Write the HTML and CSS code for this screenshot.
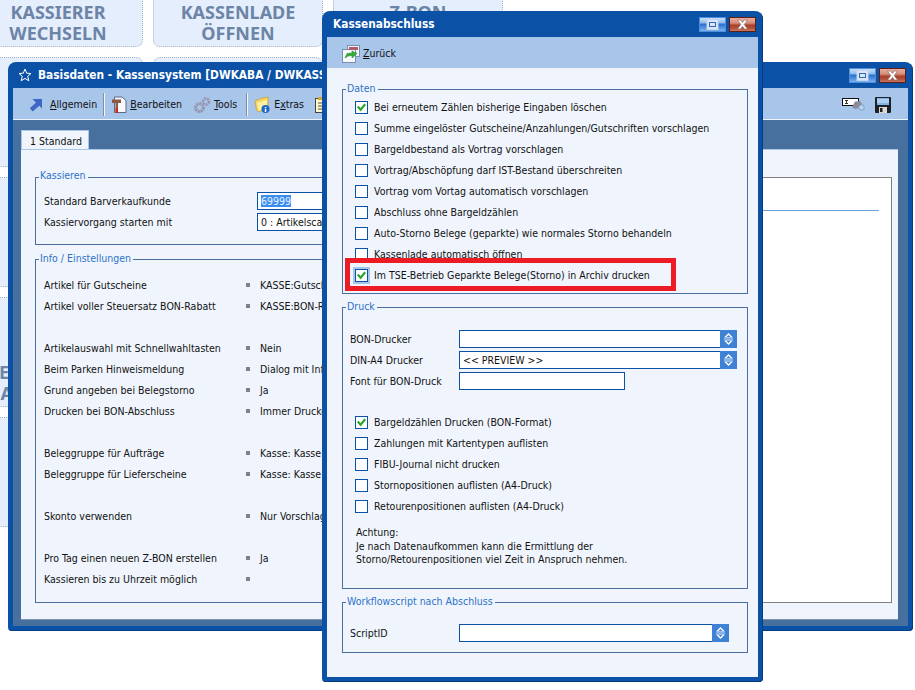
FILE: index.html
```html
<!DOCTYPE html>
<html lang="de">
<head>
<meta charset="utf-8">
<title>Kassenabschluss</title>
<link rel="stylesheet" href="styles.css">
</head>
<body>
<svg class="defs" width="0" height="0" aria-hidden="true">
  <symbol id="spin" viewBox="0 0 17 18">
    <path d="M8.5 3 13 7.5H4Z M8.5 15 13 10.5H4Z" fill="#fff"/>
    <path d="M8.5 5 10.5 7H6.5Z M8.5 13 10.5 11H6.5Z" fill="#3f81d4"/>
    <path d="M4 9H13" stroke="#cfe0f6" stroke-width="1"/>
  </symbol>
  <symbol id="tick" viewBox="0 0 12 12">
    <path d="M2 5.500 5 9 10 3" fill="none" stroke="#2ea52e" stroke-width="2.400"/>
  </symbol>
  <symbol id="restore" viewBox="0 0 27 15">
    <rect x="8" y="2.500" width="11" height="10" fill="#dbe7f7" stroke="#c5d6ee"/>
    <rect x="10.500" y="5.500" width="6" height="4" fill="none" stroke="#2f68b4"/>
  </symbol>
  <symbol id="close" viewBox="0 0 27 15">
    <path d="M8.500 3H11.500L13.500 5.500 15.500 3H18.500L15.200 7.500 18.500 12H15.500L13.500 9.500 11.500 12H8.500L11.800 7.500Z" fill="#fff" stroke="#7a6a66" stroke-width=".6"/>
  </symbol>
</svg>

<main class="desktop">
  <section class="tiles">
    <div class="tile">KASSIERER<br>WECHSELN</div>
    <div class="tile">KASSENLADE<br>ÖFFNEN</div>
    <div class="tile">Z-BON<br>DRUCKEN</div>
    <div class="tile"></div>
    <div class="tile"></div>
    <div class="tile"></div>
    <div class="tile"></div>
    <div class="tile"></div>
    <div class="tile"></div>
    <div class="tile">BEDIENERWAHL<br>NACHBUCHUNG</div>
    <div class="tile"></div>
    <div class="tile"></div>
    <div class="tile"></div>
  </section>

  <section class="window window-back">
    <header class="titlebar">
      <svg class="star" width="14" height="14" viewBox="0 0 14 14"><path d="M7 1 8.700 5.200 13 5.500 9.700 8.300 10.800 12.800 7 10.400 3.200 12.800 4.300 8.300 1 5.500 5.300 5.200Z" fill="none" stroke="#fff" stroke-width="1"/></svg>
      <h1 class="title title-back">Basisdaten - Kassensystem [DWKABA / DWKASSE]</h1>
      <div class="winbtns">
        <span class="winbtn winbtn-restore"><svg width="27" height="15"><use href="#restore"/></svg></span>
        <span class="winbtn winbtn-close"><svg width="27" height="15"><use href="#close"/></svg></span>
      </div>
    </header>
    <nav class="toolbar toolbar-back">
      <div class="tool tool-allgemein">
        <svg width="14" height="14" viewBox="0 0 14 14"><path d="M3.500 1H13V10.500L10.200 7.700 3.700 13.500 .8 10.300 7 4.500Z" fill="#3f66c4"/></svg>
        <span><u>A</u>llgemein</span>
      </div>
      <i class="sep"></i>
      <div class="tool tool-bearbeiten">
        <svg width="16" height="18" viewBox="0 0 16 18"><path d="M3.500 1H11L15 4.500V16.500H3.500Z" fill="#f7f9fd" stroke="#5a6b8a"/><path d="M1 3.500H10V7H7V17H4.500V7H1Z" fill="#8a5a44"/><rect x="4.500" y="12" width="2.500" height="5" fill="#d52a1a"/></svg>
        <span><u>B</u>earbeiten</span>
      </div>
      <div class="tool tool-tools">
        <svg width="18" height="18" viewBox="0 0 18 18"><circle cx="6.500" cy="11.500" r="4" fill="none" stroke="#8d8da8" stroke-width="3" stroke-dasharray="2 1"/><circle cx="6.500" cy="11.500" r="5" fill="none" stroke="#a9a9c0" stroke-width="1" stroke-dasharray="2 1.200"/><circle cx="13" cy="5.500" r="3" fill="none" stroke="#9090ac" stroke-width="2.500" stroke-dasharray="2 1"/><circle cx="13" cy="5.500" r="4.300" fill="none" stroke="#b0b0c4" stroke-width="1" stroke-dasharray="2 1"/></svg>
        <span><u>T</u>ools</span>
      </div>
      <i class="sep sep-2"></i>
      <div class="tool tool-extras">
        <svg width="16" height="18" viewBox="0 0 16 18"><path d="M1 5 7 2.500 14 1V11L5 16 2.500 14Z" fill="#f6d964" stroke="#c9a02c" stroke-width=".8"/><path d="M3 7 13 4V10L5 15Z" fill="#fdf0a8"/><circle cx="11.500" cy="13" r="4" fill="#1b66c9"/><rect x="10.800" y="11" width="1.500" height="1.300" fill="#fff"/><rect x="10.800" y="13" width="1.500" height="3" fill="#fff"/></svg>
        <span>E<u>x</u>tras</span>
      </div>
      <svg class="tool-clip" width="14" height="16" viewBox="0 0 14 16"><rect x=".5" y="1.500" width="12" height="14" fill="#fdf6c8" stroke="#444"/><rect x="3" y="0" width="7" height="3" fill="#d8a52a"/><path d="M3 6H10M3 9H10M3 12H8" stroke="#555"/></svg>
      <div class="tool-right">
        <svg width="23" height="13" viewBox="0 0 23 13"><rect x=".5" y=".5" width="16" height="7" fill="#fff" stroke="#111"/><path d="M3 2.500H6M3 5.500H6M4.500 2.500V5.500" stroke="#333"/><path d="M10 9 13 3.500 18 3 20 6 17 10 13 11Z" fill="#8b8b9c"/><circle cx="19.500" cy="9.500" r="2.700" fill="#bcd6ee" stroke="#6d93b8" stroke-width=".8"/></svg>
        <svg width="16" height="16" viewBox="0 0 16 16"><rect width="16" height="16" rx="1" fill="#1d2024"/><rect x="2" y="1" width="12" height="7" fill="#7fb4e8"/><path d="M2 3H14M2 5H14" stroke="#d9e9f8"/><rect x="4" y="10" width="8" height="6" fill="#d8d8d8"/><rect x="5" y="11" width="2.500" height="4" fill="#222"/></svg>
      </div>
    </nav>
    <div class="back-body">
      <div class="tab">1 Standard</div>
      <div class="panel">
        <div class="panel-left">
          <div class="group group-kassieren">
            <span class="legend">Kassieren</span>
            <div class="form-row">
              <span class="form-label">Standard Barverkaufkunde</span>
              <span class="field"><span class="selected">69999</span></span>
            </div>
            <div class="form-row">
              <span class="form-label">Kassiervorgang starten mit</span>
              <span class="field">0 : Artikelscan und Suche</span>
            </div>
          </div>
          <div class="group group-info">
            <span class="legend">Info / Einstellungen</span>
            <div class="info-row"><span>Artikel für Gutscheine</span><i class="dot"></i><span>KASSE:Gutschein</span></div>
            <div class="info-row"><span>Artikel voller Steuersatz BON-Rabatt</span><i class="dot"></i><span>KASSE:BON-Rabatt</span></div>
            <div class="info-row"></div>
            <div class="info-row"><span>Artikelauswahl mit Schnellwahltasten</span><i class="dot"></i><span>Nein</span></div>
            <div class="info-row"><span>Beim Parken Hinweismeldung</span><i class="dot"></i><span>Dialog mit Info</span></div>
            <div class="info-row"><span>Grund angeben bei Belegstorno</span><i class="dot"></i><span>Ja</span></div>
            <div class="info-row"><span>Drucken bei BON-Abschluss</span><i class="dot"></i><span>Immer Drucken</span></div>
            <div class="info-row"></div>
            <div class="info-row"><span>Beleggruppe für Aufträge</span><i class="dot"></i><span>Kasse: Kasse</span></div>
            <div class="info-row"><span>Beleggruppe für Lieferscheine</span><i class="dot"></i><span>Kasse: Kasse</span></div>
            <div class="info-row"></div>
            <div class="info-row"><span>Skonto verwenden</span><i class="dot"></i><span>Nur Vorschlag</span></div>
            <div class="info-row"></div>
            <div class="info-row"><span>Pro Tag einen neuen Z-BON erstellen</span><i class="dot"></i><span>Ja</span></div>
            <div class="info-row"><span>Kassieren bis zu Uhrzeit möglich</span><i class="dot"></i><span></span></div>
          </div>
        </div>
        <div class="white-box"><div class="white-line"></div></div>
      </div>
    </div>
  </section>

  <section class="window window-front">
    <header class="titlebar">
      <h2 class="title title-front">Kassenabschluss</h2>
      <div class="winbtns">
        <span class="winbtn winbtn-restore"><svg width="27" height="15"><use href="#restore"/></svg></span>
        <span class="winbtn winbtn-close"><svg width="27" height="15"><use href="#close"/></svg></span>
      </div>
    </header>
    <nav class="toolbar toolbar-front">
      <div class="tool">
        <svg width="18" height="18" viewBox="0 0 18 18"><rect x="5.500" y=".5" width="12" height="11" fill="#eef3fb" stroke="#7d8fae"/><rect x=".5" y="4.500" width="13" height="13" fill="#f6f8fc" stroke="#7d8fae"/><rect x="7" y="2" width="9" height="3" fill="#b45a6a"/><path d="M3 13 5 8.500 10 8 10 6 15 8.500 10 13 10 10.500 6 11Z" fill="#35b035" stroke="#1d7c1d" stroke-width=".5"/></svg>
        <span><u>Z</u>urück</span>
      </div>
    </nav>
    <div class="front-body">
      <div class="group group-daten">
        <span class="legend">Daten</span>
        <label class="check-row"><span class="box"><svg width="12" height="12"><use href="#tick"/></svg></span>Bei erneutem Zählen bisherige Eingaben löschen</label>
        <label class="check-row"><span class="box"></span>Summe eingelöster Gutscheine/Anzahlungen/Gutschriften vorschlagen</label>
        <label class="check-row"><span class="box"></span>Bargeldbestand als Vortrag vorschlagen</label>
        <label class="check-row"><span class="box"></span>Vortrag/Abschöpfung darf IST-Bestand überschreiten</label>
        <label class="check-row"><span class="box"></span>Vortrag vom Vortag automatisch vorschlagen</label>
        <label class="check-row"><span class="box"></span>Abschluss ohne Bargeldzählen</label>
        <label class="check-row"><span class="box"></span>Auto-Storno Belege (geparkte) wie normales Storno behandeln</label>
        <label class="check-row"><span class="box"></span>Kassenlade automatisch öffnen</label>
        <label class="check-row"><span class="box box-focus"><svg width="12" height="12"><use href="#tick"/></svg></span>Im TSE-Betrieb Geparkte Belege(Storno) in Archiv drucken</label>
        <div class="highlight"></div>
      </div>
      <div class="group group-druck">
        <span class="legend">Druck</span>
        <div class="print-row"><span class="print-label">BON-Drucker</span><span class="combo"><span class="combo-text"></span><svg class="spin" width="17" height="18"><use href="#spin"/></svg></span></div>
        <div class="print-row"><span class="print-label">DIN-A4 Drucker</span><span class="combo"><span class="combo-text">&lt;&lt; PREVIEW &gt;&gt;</span><svg class="spin" width="17" height="18"><use href="#spin"/></svg></span></div>
        <div class="print-row"><span class="print-label">Font für BON-Druck</span><span class="font-field"></span></div>
        <div class="print-checks">
          <label class="check-row"><span class="box"><svg width="12" height="12"><use href="#tick"/></svg></span>Bargeldzählen Drucken (BON-Format)</label>
          <label class="check-row"><span class="box"></span>Zahlungen mit Kartentypen auflisten</label>
          <label class="check-row"><span class="box"></span>FIBU-Journal nicht drucken</label>
          <label class="check-row"><span class="box"></span>Stornopositionen auflisten (A4-Druck)</label>
          <label class="check-row"><span class="box"></span>Retourenpositionen auflisten (A4-Druck)</label>
        </div>
        <p class="note">Achtung:<br>Je nach Datenaufkommen kann die Ermittlung der<br>Storno/Retourenpositionen viel Zeit in Anspruch nehmen.</p>
      </div>
      <div class="group group-workflow">
        <span class="legend">Workflowscript nach Abschluss</span>
        <div class="print-row"><span class="print-label">ScriptID</span><span class="combo combo-script"><span class="combo-text"></span><svg class="spin" width="17" height="18"><use href="#spin"/></svg></span></div>
      </div>
    </div>
  </section>
</main>
</body>
</html>
```

FILE: styles.css
```css
* { box-sizing: border-box; }

html, body {
  margin: 0;
  height: 100%;
  background: #fff;
  overflow: hidden;
}

body {
  font-family: "DejaVu Sans Condensed", "DejaVu Sans", sans-serif;
  font-size: 10.5px;
  color: #111;
}

.defs { position: absolute; }

.desktop {
  position: relative;
  width: 915px;
  height: 690px;
  overflow: hidden;
}

/* Background tiles */
.tiles {
  position: absolute;
  left: -27px;
  top: -63px;
  display: grid;
  grid-template-columns: repeat(3, 170px);
  grid-auto-rows: 110px;
  gap: 10px;
}

.tile {
  display: flex;
  align-items: flex-end;
  justify-content: center;
  padding-bottom: 2px;
  text-align: center;
  font-family: "Noto Sans", sans-serif;
  font-size: 18px;
  line-height: 21px;
  font-weight: 700;
  color: #6c84a6;
  background: #e4eefc;
  border: 1px dotted #a9b3c2;
  border-radius: 7px;
  white-space: nowrap;
}

/* Windows */
.window {
  position: absolute;
  display: flex;
  flex-direction: column;
  padding: 0 5px 5px;
  background: #0b52a6;
  border-radius: 8px 8px 4px 4px;
  box-shadow: inset -1px -1px 0 #063c80;
}

.window-back { left: 8px; top: 62px; width: 905px; height: 569px; }
.window-front { left: 322px; top: 11px; width: 441px; height: 671px; }

.titlebar {
  flex: none;
  display: flex;
  align-items: center;
  height: 26px;
  color: #fff;
}

.star { margin: 0 6px 0 5px; }

.title {
  margin: 0;
  font-size: 11.8px;
  font-weight: 700;
  white-space: nowrap;
  overflow: hidden;
  flex: 1;
}

.title-front { padding-left: 6px; }

.winbtns { display: flex; gap: 3px; margin-right: 2px; }

.winbtn {
  display: block;
  width: 27px;
  height: 15px;
  line-height: 0;
}

.winbtn-restore {
  background: linear-gradient(#cfe3fa 0, #9cc3f0 35%, #2f74cf 50%, #4f90e0 70%, #8dbcf0 100%);
  box-shadow: inset 0 0 0 1px #4c8fdf;
}

.winbtn-close {
  background: linear-gradient(#f0b3a4 0, #d68d7b 40%, #a8402b 55%, #b2503a 75%, #d48a76 100%);
  box-shadow: inset 0 0 0 1px #5a2016;
}

.toolbar {
  flex: none;
  display: flex;
  align-items: center;
  height: 31px;
  padding-top: 2px;
  background: #a8c5ea;
  line-height: 15px;
}

.toolbar-back { border-bottom: 1px solid #eef4fc; height: 32px; padding-left: 16px; }
.toolbar-front { padding-left: 15px; }

.tool { display: flex; align-items: center; gap: 3px; white-space: nowrap; }
.tool-allgemein { gap: 7px; }
.tool-bearbeiten { margin-left: 6px; gap: 3px; }
.tool-tools { margin-left: 11px; gap: 3px; }
.tool-extras { margin-left: 6px; gap: 4px; }
.tool-clip { margin-left: 11px; }
.tool-right { display: flex; align-items: center; gap: 10px; margin-left: auto; margin-right: 17px; }

.sep {
  width: 2px;
  height: 23px;
  margin-left: 6px;
  background: linear-gradient(90deg, #7f8ea3 50%, #f2f6fc 50%);
}

.sep-2 { margin-left: 9px; }

/* Back window body */
.back-body {
  flex: 1;
  display: flex;
  flex-direction: column;
  min-height: 0;
  padding: 10px 10px 6px 8px;
  background: #47709e;
}

.tab {
  align-self: flex-start;
  width: 68px;
  height: 20px;
  padding: 2px 0 0 8px;
  line-height: 16px;
  background: #f0f5fd;
  border: 1px solid #a8c5ea;
  border-bottom: 0;
  white-space: nowrap;
}

.panel {
  flex: 1;
  display: flex;
  min-height: 0;
  padding: 27px 6px 16px 14px;
  background: #f0f5fd;
  border-top: 1px solid #a8c5ea;
  border-bottom: 1px solid #7d94b0;
  margin-top: -1px;
}

.panel-left {
  flex: none;
  width: 560px;
  display: flex;
  flex-direction: column;
  gap: 14px;
}

.white-box {
  flex: 1;
  padding-top: 32px;
  padding-right: 12px;
  background: #fff;
  border: 1px solid #808080;
}

.white-line { height: 1px; background: #6ba0d8; }

/* Group boxes */
.group {
  position: relative;
  border: 1px solid #4a6f9e;
}

.legend {
  position: absolute;
  top: -10px;
  left: 3px;
  padding: 0 2px 0 1px;
  line-height: 16px;
  color: #2f72c8;
  background: #f0f5fd;
  white-space: nowrap;
}

.group-kassieren .legend { top: -11px; }

.group-kassieren { height: 68px; padding: 14px 0 0 8px; }
.group-info { flex: 1; padding: 14px 0 0 8px; }

.form-row {
  display: flex;
  align-items: flex-start;
  height: 21px;
}

.form-label { width: 213px; flex: none; line-height: 18px; }

.field {
  width: 200px;
  height: 18px;
  padding-left: 3px;
  line-height: 16px;
  background: #fff;
  border: 1px solid #0b52a6;
  white-space: nowrap;
}

.selected { background: #3a8ef0; color: #e8f2ff; }

.info-row {
  display: flex;
  align-items: center;
  height: 21px;
  white-space: nowrap;
}

.info-row span:first-child { width: 202px; flex: none; }

.dot {
  flex: none;
  width: 4px;
  height: 4px;
  margin-right: 10px;
  background: #808080;
}

/* Front window body */
.front-body {
  flex: 1;
  display: flex;
  flex-direction: column;
  gap: 13px;
  padding: 21px 10px 0 15px;
  background: #f0f5fd;
}

.group-daten { height: 205px; padding: 6px 0 0 12px; }
.group-druck { height: 282px; padding: 22px 0 0 7px; }
.group-workflow { height: 51px; padding: 21px 0 0 7px; }

.check-row {
  display: flex;
  align-items: center;
  gap: 6px;
  height: 21px;
  white-space: nowrap;
}

.box {
  flex: none;
  display: flex;
  align-items: center;
  justify-content: center;
  width: 13px;
  height: 13px;
  margin-top: 1px;
  background: #fff;
  border: 1px solid #0b52a6;
}

.box-focus {
  background: #fff;
  outline: 2px solid #a8c5ea;
}

.highlight {
  position: absolute;
  left: 2px;
  top: 168px;
  width: 331px;
  height: 33px;
  border: 5px solid #ed1c24;
}

.print-row {
  display: flex;
  align-items: flex-start;
  height: 21px;
  white-space: nowrap;
}

.print-label { flex: none; width: 109px; line-height: 18px; }

.combo {
  display: flex;
  width: 278px;
  height: 18px;
  background: #fff;
  border: 1px solid #0b52a6;
}

.combo-script { width: 270px; }

.combo-text { flex: 1; padding-left: 3px; line-height: 16px; }

.spin {
  flex: none;
  margin: -1px -1px -1px 0;
  background: #3f81d4;
}

.font-field {
  width: 166px;
  height: 18px;
  background: #fff;
  border: 1px solid #0b52a6;
}

.print-checks { margin: 18px 0 0 5px; }

.note {
  margin: 10px 0 0 6px;
  line-height: 13.5px;
}
```
